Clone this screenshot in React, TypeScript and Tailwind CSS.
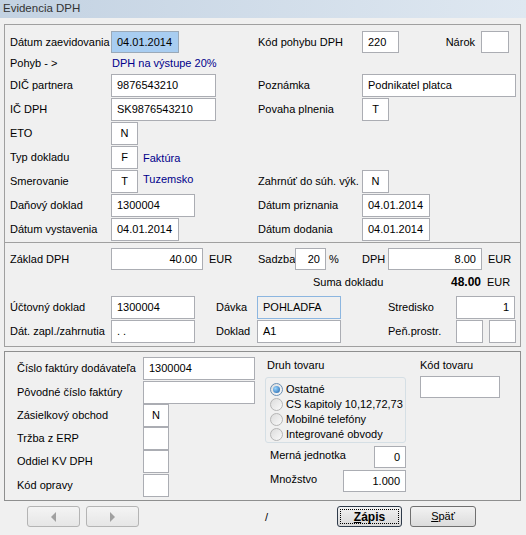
import React from "react";

const Lbl = ({ children, className = "" }: { children?: React.ReactNode; className?: string }) => (
  <div className={`flex items-center self-stretch whitespace-nowrap ${className}`}>{children}</div>
);

const Box = ({
  children,
  className = "",
  bg = "bg-white",
  border = "border-[#abadb3]",
}: {
  children?: React.ReactNode;
  className?: string;
  bg?: string;
  border?: string;
}) => (
  <div className={`border ${border} ${bg} flex items-center px-[5px] whitespace-nowrap shrink-0 ${className}`}>{children}</div>
);

const Radio = ({ checked, label }: { checked?: boolean; label: string }) => (
  <div className="flex items-center h-[15px] whitespace-nowrap">
    <div
      className={`w-[13px] h-[13px] shrink-0 rounded-full border ${
        checked ? "border-[#6b8fb3]" : "border-[#b5b5b5]"
      } bg-gradient-to-br from-[#dcdcdc] to-[#fafafa] flex items-center justify-center`}
    >
      {checked && (
        <div className="w-[7px] h-[7px] rounded-full bg-[radial-gradient(circle_at_35%_35%,#9ad6ff,#1b5fa8)]" />
      )}
    </div>
    <span className="ml-[3px]">{label}</span>
  </div>
);

export default function App() {
  return (
    <div className="w-[526px] h-[535px] bg-[#f0f0f0] text-black text-[11px] leading-none font-['Liberation_Sans',Arial,sans-serif] overflow-hidden">
      {/* title bar */}
      <div className="h-[18px] bg-gradient-to-r from-[#c3d2e2] to-[#dfe8f1] flex items-center pl-[3px] text-[#333] text-[11.5px]">
        Evidencia DPH
      </div>

      {/* top panel */}
      <div className="mt-[6px] ml-[4px] w-[517px] border border-[#a0a0a0]">
        {/* section 1 */}
        <div className="pl-[5px] pt-[6px] border-b border-[#a0a0a0]">
          {/* row 1 */}
          <div className="flex h-[22px]">
            <div className="flex w-[248px]">
              <Lbl className="w-[101px]">Dátum zaevidovania</Lbl>
              <Box className="w-[68px] h-[22px]" bg="bg-[#a8cdf1]" border="border-[#9aa9b8]">04.01.2014</Box>
            </div>
            <Lbl className="w-[104px]">Kód pohybu DPH</Lbl>
            <Box className="w-[37px] h-[22px]">220</Box>
            <Lbl className="w-[82px] justify-end pr-[6px]">Nárok</Lbl>
            <Box className="w-[28px] h-[22px]" />
          </div>
          {/* row 2 */}
          <div className="flex h-[21px]">
            <Lbl className="w-[101px]">Pohyb - &gt;</Lbl>
            <Lbl className="pl-[1px] text-[#00008b]">DPH na výstupe 20%</Lbl>
          </div>
          {/* row 3 */}
          <div className="flex h-[24px]">
            <div className="flex w-[248px] h-[23px]">
              <Lbl className="w-[101px]">DIČ partnera</Lbl>
              <Box className="w-[105px] h-[23px]">9876543210</Box>
            </div>
            <div className="flex h-[23px]">
              <Lbl className="w-[104px]">Poznámka</Lbl>
              <Box className="w-[154px] h-[23px]">Podnikatel platca</Box>
            </div>
          </div>
          {/* row 4 */}
          <div className="flex h-[24px]">
            <div className="flex w-[248px] h-[23px]">
              <Lbl className="w-[101px]">IČ DPH</Lbl>
              <Box className="w-[105px] h-[23px]">SK9876543210</Box>
            </div>
            <div className="flex h-[23px]">
              <Lbl className="w-[104px]">Povaha plnenia</Lbl>
              <Box className="w-[27px] h-[23px] justify-center">T</Box>
            </div>
          </div>
          {/* row 5 */}
          <div className="flex h-[24px]">
            <div className="flex w-[248px] h-[23px]">
              <Lbl className="w-[101px]">ETO</Lbl>
              <Box className="w-[27px] h-[23px] justify-center">N</Box>
            </div>
          </div>
          {/* row 6 */}
          <div className="flex h-[24px]">
            <div className="flex w-[248px] h-[23px]">
              <Lbl className="w-[101px]">Typ dokladu</Lbl>
              <Box className="w-[27px] h-[23px] justify-center">F</Box>
              <Lbl className="ml-[5px] pt-[2px] text-[#00008b]">Faktúra</Lbl>
            </div>
          </div>
          {/* row 7 */}
          <div className="flex h-[24px]">
            <div className="flex w-[248px] h-[23px]">
              <Lbl className="w-[101px]">Smerovanie</Lbl>
              <Box className="w-[27px] h-[23px] justify-center">T</Box>
              <Lbl className="ml-[5px] pb-[4px] text-[#00008b]">Tuzemsko</Lbl>
            </div>
            <div className="flex h-[23px]">
              <Lbl className="w-[104px]">Zahrnúť do súh. výk.</Lbl>
              <Box className="w-[27px] h-[23px] justify-center">N</Box>
            </div>
          </div>
          {/* row 8 */}
          <div className="flex h-[24px]">
            <div className="flex w-[248px] h-[23px]">
              <Lbl className="w-[101px]">Daňový doklad</Lbl>
              <Box className="w-[84px] h-[23px]">1300004</Box>
            </div>
            <div className="flex h-[23px]">
              <Lbl className="w-[104px]">Dátum priznania</Lbl>
              <Box className="w-[68px] h-[23px]">04.01.2014</Box>
            </div>
          </div>
          {/* row 9 */}
          <div className="flex h-[24px]">
            <div className="flex w-[248px] h-[23px]">
              <Lbl className="w-[101px]">Dátum vystavenia</Lbl>
              <Box className="w-[68px] h-[23px]">04.01.2014</Box>
            </div>
            <div className="flex h-[23px]">
              <Lbl className="w-[104px]">Dátum dodania</Lbl>
              <Box className="w-[68px] h-[23px]">04.01.2014</Box>
            </div>
          </div>
        </div>

        {/* section 2 */}
        <div className="pl-[5px] pt-[5px] pb-[2px]">
          {/* row A */}
          <div className="flex h-[24px]">
            <div className="flex w-[248px] h-[22px]">
              <Lbl className="w-[101px]">Základ DPH</Lbl>
              <Box className="w-[92px] h-[22px] justify-end">40.00</Box>
              <Lbl className="ml-[6px]">EUR</Lbl>
            </div>
            <div className="flex h-[22px]">
              <Lbl className="w-[37px]">Sadzba</Lbl>
              <Box className="w-[31px] h-[22px] justify-end">20</Box>
              <Lbl className="w-[36px] pl-[3px]">%</Lbl>
              <Lbl className="w-[26px]">DPH</Lbl>
              <Box className="w-[94px] h-[22px] justify-end">8.00</Box>
              <Lbl className="ml-[6px]">EUR</Lbl>
            </div>
          </div>
          {/* row B */}
          <div className="flex h-[24px]">
            <div className="w-[303px]" />
            <div className="flex w-[171px] h-[20px] justify-between items-center">
              <span>Suma dokladu</span>
              <span className="font-bold text-[12px] pr-[3px]">48.00</span>
            </div>
            <div className="h-[20px] ml-[3px] flex items-center">EUR</div>
          </div>
          {/* row C */}
          <div className="flex h-[24px]">
            <div className="flex h-[23px]">
              <Lbl className="w-[101px]">Účtovný doklad</Lbl>
              <Box className="w-[84px] h-[23px]">1300004</Box>
              <Lbl className="ml-[21px] w-[41px]">Dávka</Lbl>
              <Box className="w-[84px] h-[23px]" bg="bg-[#f0f0f0]" border="border-[#8cb6e0]">POHLADFA</Box>
              <Lbl className="ml-[47px] w-[68px]">Stredisko</Lbl>
              <Box className="w-[59px] h-[23px] justify-end">1</Box>
            </div>
          </div>
          {/* row D */}
          <div className="flex h-[24px]">
            <div className="flex h-[23px]">
              <Lbl className="w-[101px]">Dát. zapl./zahrnutia</Lbl>
              <Box className="w-[84px] h-[23px]">. .</Box>
              <Lbl className="ml-[21px] w-[41px]">Doklad</Lbl>
              <Box className="w-[84px] h-[23px]">A1</Box>
              <Lbl className="ml-[47px] w-[68px]">Peň.prostr.</Lbl>
              <Box className="w-[27px] h-[23px]" />
              <Box className="ml-[6px] w-[27px] h-[23px]" />
            </div>
          </div>
        </div>
      </div>

      {/* bottom panel */}
      <div className="mt-[4px] ml-[4px] w-[517px] h-[150px] border border-[#8e8f8f] flex">
        {/* left column */}
        <div className="w-[260px] pl-[12px] pt-[5px]">
          <div className="flex h-[24px]">
            <Lbl className="w-[126px] h-[23px]">Číslo faktúry dodávateľa</Lbl>
            <Box className="w-[112px] h-[23px]">1300004</Box>
          </div>
          <div className="flex h-[23px]">
            <Lbl className="w-[126px] h-[23px]">Pôvodné číslo faktúry</Lbl>
            <Box className="w-[112px] h-[23px]" />
          </div>
          <div className="flex h-[23px]">
            <Lbl className="w-[126px] h-[23px]">Zásielkový obchod</Lbl>
            <Box className="w-[26px] h-[23px] justify-center">N</Box>
          </div>
          <div className="flex h-[23px]">
            <Lbl className="w-[126px] h-[23px]">Tržba z ERP</Lbl>
            <Box className="w-[26px] h-[23px]" />
          </div>
          <div className="flex h-[24px]">
            <Lbl className="w-[126px] h-[23px]">Oddiel KV DPH</Lbl>
            <Box className="w-[26px] h-[23px]" />
          </div>
          <div className="flex h-[24px]">
            <Lbl className="w-[126px] h-[23px]">Kód opravy</Lbl>
            <Box className="w-[26px] h-[23px]" />
          </div>
        </div>

        {/* right column */}
        <div className="pt-[5px]">
          <div className="flex">
            <div className="w-[141px]">
              <div className="h-[16px] pl-[2px] flex items-center">Druh tovaru</div>
              <div className="mt-[4px] h-[66px] rounded-[3px] border border-[#d5dfe5] pl-[4px] pt-[4px]">
                <Radio checked label="Ostatné" />
                <Radio label="CS kapitoly 10,12,72,73" />
                <Radio label="Mobilné telefóny" />
                <Radio label="Integrované obvody" />
              </div>
            </div>
            <div className="ml-[14px]">
              <div className="h-[16px] flex items-center">Kód tovaru</div>
              <Box className="mt-[3px] w-[80px] h-[22px]" />
            </div>
          </div>
          <div className="flex w-[141px] h-[22px] mt-[3px] justify-between">
            <Lbl className="pl-[5px] pb-[3px]">Merná jednotka</Lbl>
            <Box className="w-[32px] h-[22px] justify-end">0</Box>
          </div>
          <div className="flex w-[141px] h-[22px] mt-[2px] justify-between">
            <Lbl className="pl-[5px] pb-[3px]">Množstvo</Lbl>
            <Box className="w-[63px] h-[22px] justify-end">1.000</Box>
          </div>
        </div>
      </div>

      {/* buttons */}
      <div className="flex mt-[5px] pl-[27px] h-[21px]">
        <div className="w-[53px] h-[21px] rounded-[3px] border border-[#b4b4b4] bg-gradient-to-b from-[#f4f4f4] to-[#e6e6e6] flex items-center justify-center">
          <div className="w-0 h-0 border-y-[5px] border-y-transparent border-r-[5px] border-r-[#a0a0a0]" />
        </div>
        <div className="ml-[6px] w-[53px] h-[21px] rounded-[3px] border border-[#b4b4b4] bg-gradient-to-b from-[#f4f4f4] to-[#e6e6e6] flex items-center justify-center">
          <div className="w-0 h-0 border-y-[5px] border-y-transparent border-l-[5px] border-l-[#a0a0a0]" />
        </div>
        <div className="ml-[126px] w-[72px] flex items-center pt-[1px]">/</div>
        <div className="w-[65px] h-[21px] rounded-[3px] border border-[#2f3b4a] bg-gradient-to-b from-[#f2f2f2] to-[#d8d8d8] p-[2px]">
          <div className="w-full h-full border border-dotted border-black flex items-center justify-center font-bold text-[12px]">
            <span>
              <span className="underline">Z</span>ápis
            </span>
          </div>
        </div>
        <div className="ml-[8px] w-[66px] h-[21px] rounded-[3px] border border-[#707070] bg-gradient-to-b from-[#f2f2f2] to-[#dcdcdc] flex items-center justify-center">
          <span>
            <span className="underline">S</span>päť
          </span>
        </div>
      </div>
    </div>
  );
}
